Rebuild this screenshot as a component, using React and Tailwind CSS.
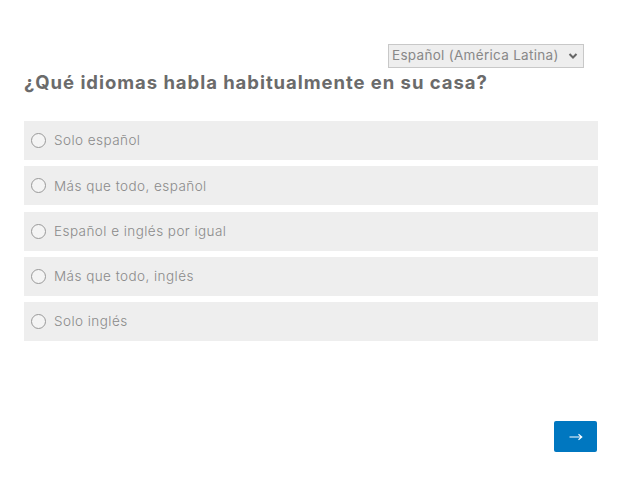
import React from "react";

const options = [
  "Solo español",
  "Más que todo, español",
  "Español e inglés por igual",
  "Más que todo, inglés",
  "Solo inglés",
];

export default function App() {
  return (
    <div className="w-[633px] h-[486px] bg-white relative" style={{ fontFamily: "Inter, 'Noto Sans', sans-serif" }}>
      <div className="pt-[44px] pl-[24px] pr-[35px]">
        <div className="flex justify-end pr-[14px]">
          <div className="w-[196px] h-[24px] bg-[#eeeeee] border border-[#c8c8c8] flex items-center pl-[3px] pr-[5px]">
            <span className="text-[13.5px] text-[#888888] tracking-[0.3px] leading-none flex-1">Español (América Latina)</span>
            <svg width="10" height="8" viewBox="0 0 10 8"><path d="M1.5 2 L5 5.5 L8.5 2" stroke="#666" strokeWidth="2" fill="none" /></svg>
          </div>
        </div>
        <h1 className="mt-[1px] text-[18.5px] font-bold text-[#6b6b6b] leading-[26px] tracking-[0.95px]">¿Qué idiomas habla habitualmente en su casa?</h1>
        <div className="mt-[26px] flex flex-col gap-[6.25px] w-[574px]">
          {options.map((o) => (
            <label key={o} className="h-[39px] bg-[#eeeeee] flex items-center pl-[7px]">
              <span className="w-[15px] h-[15px] rounded-full border border-[#999999] bg-[#f4f4f4] mr-[8px]" />
              <span className="text-[13.5px] font-light text-[#8a8a8a] tracking-[0.45px]">{o}</span>
            </label>
          ))}
        </div>
        <div className="flex justify-end mt-[80px] w-[573px]">
          <button className="w-[43px] h-[31px] bg-[#0077c0] rounded-[2px] flex items-center justify-center">
            <svg width="14" height="8" viewBox="0 0 14 8"><path d="M0.5 4 H12.5 M9.5 1.3 L12.8 4 L9.5 6.7" stroke="white" strokeWidth="1.1" fill="none" /></svg>
          </button>
        </div>
      </div>
    </div>
  );
}
